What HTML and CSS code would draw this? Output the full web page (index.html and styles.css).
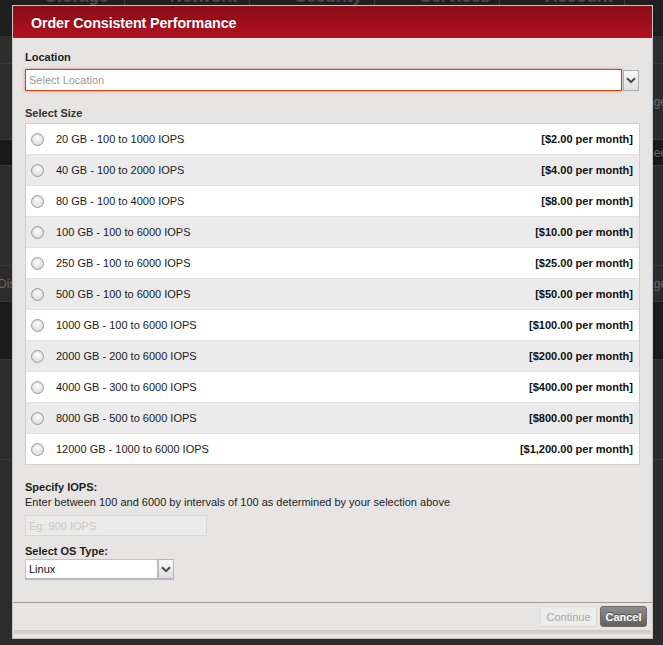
FILE: index.html
```html
<!DOCTYPE html>
<html>
<head>
<meta charset="utf-8">
<link rel="stylesheet" href="styles.css">
</head>
<body>
<div class="page">
  <div class="nav">
    <span class="nav-item">Storage</span>
    <span class="nav-item">Network</span>
    <span class="nav-item">Security</span>
    <span class="nav-item">Services</span>
    <span class="nav-item">Account</span>
  </div>
  <div class="bg-row r1"></div>
  <div class="bg-row r2"><span class="bg-txt right">age</span></div>
  <div class="bg-row r3"><span class="bg-txt right">ee</span></div>
  <div class="bg-row r4"></div>
  <div class="bg-row r5"><span class="bg-txt">Dis</span><span class="bg-txt right">age</span></div>
  <div class="bg-row r6"></div>
  <div class="bg-row r7"></div>
  <div class="bg-row r8"></div>
</div>

<div class="modal">
  <div class="modal-header"><h1 class="modal-title">Order Consistent Performance</h1></div>
  <div class="modal-body">
    <div class="label first">Location</div>
    <div class="select-wrap wide">
      <div class="select-field focus"><span class="placeholder">Select Location</span></div>
      <div class="select-arrow"><svg width="10" height="7" viewBox="0 0 10 7"><path d="M1 1.2 L5 5.2 L9 1.2" fill="none" stroke="#4a4a4a" stroke-width="2"/></svg></div>
    </div>

    <div class="label size-label">Select Size</div>
    <div class="size-table">
      <div class="size-row"><span class="radio"></span><span class="size-name">20 GB - 100 to 1000 IOPS</span><span class="price">[$2.00 per month]</span></div>
      <div class="size-row alt"><span class="radio"></span><span class="size-name">40 GB - 100 to 2000 IOPS</span><span class="price">[$4.00 per month]</span></div>
      <div class="size-row"><span class="radio"></span><span class="size-name">80 GB - 100 to 4000 IOPS</span><span class="price">[$8.00 per month]</span></div>
      <div class="size-row alt"><span class="radio"></span><span class="size-name">100 GB - 100 to 6000 IOPS</span><span class="price">[$10.00 per month]</span></div>
      <div class="size-row"><span class="radio"></span><span class="size-name">250 GB - 100 to 6000 IOPS</span><span class="price">[$25.00 per month]</span></div>
      <div class="size-row alt"><span class="radio"></span><span class="size-name">500 GB - 100 to 6000 IOPS</span><span class="price">[$50.00 per month]</span></div>
      <div class="size-row"><span class="radio"></span><span class="size-name">1000 GB - 100 to 6000 IOPS</span><span class="price">[$100.00 per month]</span></div>
      <div class="size-row alt"><span class="radio"></span><span class="size-name">2000 GB - 200 to 6000 IOPS</span><span class="price">[$200.00 per month]</span></div>
      <div class="size-row"><span class="radio"></span><span class="size-name">4000 GB - 300 to 6000 IOPS</span><span class="price">[$400.00 per month]</span></div>
      <div class="size-row alt"><span class="radio"></span><span class="size-name">8000 GB - 500 to 6000 IOPS</span><span class="price">[$800.00 per month]</span></div>
      <div class="size-row last"><span class="radio"></span><span class="size-name">12000 GB - 1000 to 6000 IOPS</span><span class="price">[$1,200.00 per month]</span></div>
    </div>

    <div class="label iops-label">Specify IOPS:</div>
    <div class="hint">Enter between 100 and 6000 by intervals of 100 as determined by your selection above</div>
    <div class="iops-input"><span class="placeholder light">Eg: 900 IOPS</span></div>

    <div class="label os-label">Select OS Type:</div>
    <div class="select-wrap os">
      <div class="select-field os-field"><span class="value">Linux</span></div>
      <div class="select-arrow os-arrow"><svg width="10" height="7" viewBox="0 0 10 7"><path d="M1 1.2 L5 5.2 L9 1.2" fill="none" stroke="#4a4a4a" stroke-width="2"/></svg></div>
    </div>
  </div>
  <div class="modal-footer">
    <button class="btn btn-continue">Continue</button>
    <button class="btn btn-cancel">Cancel</button>
  </div>
  <div class="modal-bottom"></div>
</div>
</body>
</html>
```

FILE: styles.css
```css
* { box-sizing: border-box; }
html, body { margin: 0; padding: 0; }
body {
  width: 663px;
  height: 645px;
  overflow: hidden;
  background: #2c2c2c;
  font-family: "Liberation Sans", Arial, Helvetica, sans-serif;
  position: relative;
}

/* background page */
.page { width: 663px; }
.nav {
  height: 36px;
  background: #1f1f1f;
  display: flex;
  overflow: hidden;
}
.nav-item {
  width: 125px;
  padding-left: 45px;
  margin-top: -13px;
  font-size: 17px;
  font-weight: bold;
  color: #4a4a4a;
  border-right: 1px solid #3a3a3a;
  height: 20px;
}
.bg-row {
  border-bottom: 1px solid #393939;
  display: flex;
  justify-content: space-between;
  align-items: center;
  font-size: 12px;
  color: #777;
}
.r1 { height: 28px; background: #2e2e2e; }
.r2 { height: 76px; background: #2c2c2c; }
.r3 { height: 26px; background: #191919; }
.r4 { height: 100px; background: #2c2c2c; }
.r5 { height: 36px; background: #2c2c2c; }
.r6 { height: 58px; background: #1b1b1b; }
.r7 { height: 100px; background: #2c2c2c; }
.r8 { height: 190px; background: #2c2c2c; }
.bg-txt { color: #6a6a6a; margin-left: -2px; }
.bg-txt.right { margin-left: auto; margin-right: -4px; }

/* modal */
.modal {
  position: absolute;
  left: 12px;
  top: 5px;
  width: 641px;
  height: 634px;
  background: #e6e5e3;
  border: 1px solid #c4c4c4;
  display: flex;
  flex-direction: column;
}
.modal-header {
  height: 32px;
  background: linear-gradient(to bottom, #8a0d17 0%, #a30f1c 60%, #b01221 100%);
  padding: 1px 0 0 18px;
  display: flex;
  align-items: center;
  flex-shrink: 0;
}
.modal-title {
  margin: 0;
  font-size: 14.3px;
  font-weight: bold;
  color: #fff;
  letter-spacing: -0.1px;
  text-shadow: 0 -1px 0 rgba(0,0,0,0.35);
}
.modal-body {
  padding: 0 12px;
  flex: 1;
  display: flex;
  flex-direction: column;
}
.label {
  font-size: 11px;
  font-weight: bold;
  color: #1e1e1e;
  line-height: 13px;
  height: 13px;
}
.label.first { margin-top: 13px; }
.size-label { margin-top: 16px; color: #333; }
.iops-label { margin-top: 16px; }
.os-label { margin-top: 9px; }

.select-wrap { display: flex; height: 22px; margin-top: 5px; }
.select-wrap.wide { width: 614px; }
.select-field {
  flex: 1;
  background: #fff;
  border: 1px solid #bbb;
  display: flex;
  align-items: center;
  padding-left: 3px;
  font-size: 11px;
}
.select-field.focus {
  border: 1px solid #d2410f;
  box-shadow: 0 0 3px rgba(220, 80, 40, 0.55);
}
.placeholder { color: #9a9a9a; }
.placeholder.light { color: #c8c8c8; }
.select-arrow {
  width: 16px;
  margin-left: 1px;
  margin-top: 1px;
  background: linear-gradient(to bottom, #fafafa, #dedede);
  border: 1px solid #adadad;
  display: flex;
  align-items: center;
  justify-content: center;
}

.size-table {
  margin-top: 3px;
  width: 615px;
  border: 1px solid #cfcfcf;
  background: #fff;
}
.size-row {
  height: 31px;
  display: flex;
  align-items: center;
  padding: 0 6px 0 5px;
  background: #fff;
  border-bottom: 1px solid #e3e3e3;
  font-size: 11px;
  color: #1a1a1a;
}
.size-row.alt { background: #ebebeb; }
.size-row.last { border-bottom: none; height: 30px; }
.radio {
  width: 13px;
  height: 13px;
  border-radius: 50%;
  border: 1px solid #9c9c9c;
  background: radial-gradient(circle at 50% 35%, #fdfdfd 0%, #e6e6e6 55%, #cfcfcf 100%);
  box-shadow: inset 0 1px 1px rgba(0,0,0,0.08);
  flex-shrink: 0;
}
.size-name { margin-left: 12px; }
.price { margin-left: auto; font-weight: bold; color: #111; }

.hint {
  font-size: 11px;
  color: #1e1e1e;
  margin-top: 2px;
  line-height: 13px;
}
.iops-input {
  margin-top: 6px;
  width: 182px;
  height: 21px;
  background: #ebebeb;
  border: 1px solid #d8d8d8;
  display: flex;
  align-items: center;
  padding-left: 3px;
  font-size: 11px;
}
.select-wrap.os { width: 149px; height: 21px; margin-top: 1px; }
.os-field {
  border-color: #c2c2c2;
  border-bottom: 2px solid #b3b7cb;
  font-size: 11px;
  color: #111;
}
.os-arrow { margin-top: 0; margin-left: 0; width: 16px; border-color: #b5b5b5; border-bottom: 2px solid #b3b7cb; }

.modal-footer {
  flex-shrink: 0;
  height: 28px;
  border-top: 1px solid #9b9b9b;
  display: flex;
  justify-content: flex-end;
  align-items: flex-start;
  padding: 3px 5px 0 0;
  gap: 3px;
}
.btn {
  height: 21px;
  border-radius: 3px;
  font-family: "Liberation Sans", Arial, sans-serif;
  font-size: 11px;
  padding: 0;
}
.btn-continue {
  width: 57px;
  background: #ececec;
  border: 1px solid #d9d9d9;
  color: #a8a8a8;
}
.btn-cancel {
  width: 47px;
  background: linear-gradient(to bottom, #8f8f8f, #5f5f5f);
  border: 1px solid #6a6a6a;
  color: #fff;
  font-weight: bold;
  text-shadow: 0 -1px 0 rgba(0,0,0,0.4);
}
.modal-bottom {
  height: 4px;
  margin: 0 1px 4px;
  background: linear-gradient(to bottom, #c8c8c8, #d6d6d6);
  flex-shrink: 0;
}
```
